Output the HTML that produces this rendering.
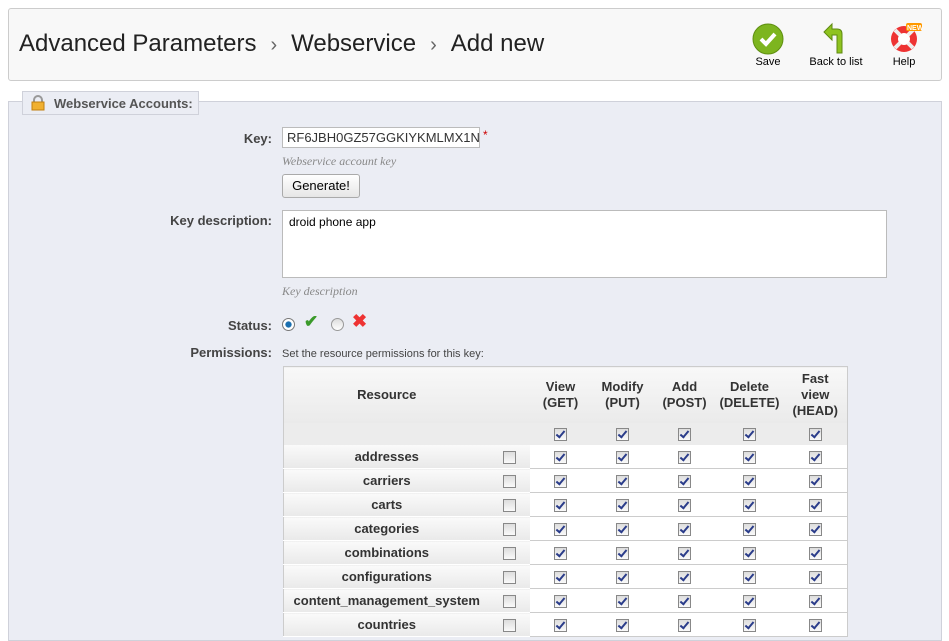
<!DOCTYPE html>
<html><head><meta charset="utf-8"><style>
*{box-sizing:border-box;margin:0;padding:0}
body{width:949px;height:630px;overflow:hidden;background:#fff;font-family:"Liberation Sans",Arial,sans-serif;position:relative;color:#333}
.a{position:absolute}
.hdr{left:8px;top:8px;width:934px;height:73px;border:1px solid #ccc;border-radius:3px;background:#f8f8f8}
.title{left:19px;top:30px;font-size:24px;color:#222;white-space:nowrap}
.title span{color:#666;margin:0 14px;font-size:20px}
.tb{font-size:11px;color:#000;text-align:center}
.fs{left:8px;top:101px;width:934px;height:540px;background:#ebedf4;border:1px solid #cfd1da}
.legend{left:22px;top:91px;width:177px;height:24px;background:#ebedf4;border:1px solid #cfd1da;font-weight:bold;font-size:13px;color:#555;padding:4px 0 0 31px}
.lbl{font-weight:bold;font-size:13px;color:#444;text-align:right;width:120px}
.hint{font-family:"Liberation Serif",serif;font-style:italic;font-size:12px;color:#888}
table{border-collapse:collapse;position:absolute;left:283px;top:366px;width:565px;font-size:13px;border:1px solid #ccc}
td,th{padding:0;text-align:center;height:24px}
th{background:linear-gradient(#f8f8f8,#eaeaea);font-weight:bold;color:#333;line-height:16px;height:56px}
tr.r td.l{background:linear-gradient(#fafafa,#e9e9e9);font-weight:bold;color:#333;border-bottom:1px solid #fff}
tr.r td.w{background:#fff;border-bottom:1px solid #ccc}
tr.g td{background:#ececec;height:22px}
.cb{display:inline-block;width:13px;height:13px;border:1px solid #888;background:linear-gradient(#ddd,#fafafa);vertical-align:middle;position:relative}
.cb.c::after{content:"";position:absolute;left:3px;top:0px;width:3px;height:7px;border:solid #2a3c8a;border-width:0 2px 2px 0;transform:rotate(40deg)}
</style></head><body>
<div class="a hdr"></div>
<div class="a title">Advanced Parameters<span>›</span>Webservice<span>›</span>Add new</div>
<svg class="a" style="left:752px;top:23px" width="32" height="32"><circle cx="16" cy="16" r="15" fill="#7db51f" stroke="#5f8f10"/><path d="M9 16l5 5 9-10" stroke="#fff" stroke-width="4" fill="none"/></svg>
<div class="a tb" style="left:748px;top:56px;width:40px">Save</div>
<svg class="a" style="left:822px;top:22px" width="30" height="32"><path d="M20 31V12q0-5-5-5H10V2L2 10l8 8v-5h5v18z" fill="#8fc31f" stroke="#5e8a10"/></svg>
<div class="a tb" style="left:806px;top:56px;width:60px">Back to list</div>
<svg class="a" style="left:888px;top:22px" width="34" height="32"><circle cx="16" cy="17" r="13" fill="#e33"/><circle cx="16" cy="17" r="6" fill="#fff"/><path d="M7 8l5 5M25 8l-5 5M7 26l5-5M25 26l-5-5" stroke="#eee" stroke-width="4"/><rect x="18" y="1" width="16" height="8" rx="2" fill="#f90"/><text x="19" y="8" font-size="7" fill="#fff" font-weight="bold" font-family="Liberation Sans">NEW</text></svg>
<div class="a tb" style="left:884px;top:56px;width:40px">Help</div>

<div class="a fs"></div>
<div class="a legend">Webservice Accounts:</div>
<svg class="a" style="left:31px;top:95px" width="14" height="16"><path d="M3 7V5a4 4 0 018 0v2" stroke="#999" stroke-width="2" fill="none"/><rect x="1" y="7" width="12" height="8" fill="#f0b030" stroke="#c08010"/></svg>

<div class="a lbl" style="left:152px;top:131px">Key:</div>
<div class="a" style="left:282px;top:127px;width:198px;height:21px;border:1px solid #bbb;background:#fff;font-size:13px;padding:2px 4px;overflow:hidden;white-space:nowrap">RF6JBH0GZ57GGKIYKMLMX1N0C</div>
<div class="a" style="left:483px;top:128px;color:#c00;font-size:12px">*</div>
<div class="a hint" style="left:282px;top:154px">Webservice account key</div>
<div class="a" style="left:282px;top:174px;width:78px;height:24px;border:1px solid #aaa;border-radius:3px;background:linear-gradient(#fff,#e6e6e6);font-size:13px;color:#000;text-align:center;line-height:22px">Generate!</div>

<div class="a lbl" style="left:152px;top:213px">Key description:</div>
<div class="a" style="left:282px;top:210px;width:605px;height:68px;border:1px solid #bbb;background:#fff;font-size:12px;color:#000;padding:4px 6px">droid phone app</div>
<div class="a hint" style="left:282px;top:284px">Key description</div>

<div class="a lbl" style="left:152px;top:318px">Status:</div>
<div class="a" style="left:282px;top:318px;width:13px;height:13px;border-radius:50%;border:1px solid #777;background:radial-gradient(#1a6fb0 35%,#fff 45%)"></div>
<div class="a" style="left:304px;top:312px;color:#3a9a2a;font-size:17px;font-weight:bold">✔</div>
<div class="a" style="left:331px;top:318px;width:13px;height:13px;border-radius:50%;border:1px solid #999;background:linear-gradient(#ddd,#fff)"></div>
<div class="a" style="left:352px;top:311px;color:#e33;font-size:18px;font-weight:bold">✖</div>

<div class="a lbl" style="left:152px;top:345px">Permissions:</div>
<div class="a" style="left:282px;top:348px;font-size:11px;color:#444">Set the resource permissions for this key:</div>

<table>
<tr><th style="width:206px">Resource</th><th style="width:40px"></th><th style="width:62px">View<br>(GET)</th><th style="width:62px">Modify<br>(PUT)</th><th style="width:62px">Add<br>(POST)</th><th style="width:68px">Delete<br>(DELETE)</th><th>Fast<br>view<br>(HEAD)</th></tr>
<tr class="g"><td></td><td></td><td><i class="cb c"></i></td><td><i class="cb c"></i></td><td><i class="cb c"></i></td><td><i class="cb c"></i></td><td><i class="cb c"></i></td></tr>
<tr class="r"><td class="l">addresses</td><td class="l"><i class="cb"></i></td><td class="w"><i class="cb c"></i></td><td class="w"><i class="cb c"></i></td><td class="w"><i class="cb c"></i></td><td class="w"><i class="cb c"></i></td><td class="w"><i class="cb c"></i></td></tr>
<tr class="r"><td class="l">carriers</td><td class="l"><i class="cb"></i></td><td class="w"><i class="cb c"></i></td><td class="w"><i class="cb c"></i></td><td class="w"><i class="cb c"></i></td><td class="w"><i class="cb c"></i></td><td class="w"><i class="cb c"></i></td></tr>
<tr class="r"><td class="l">carts</td><td class="l"><i class="cb"></i></td><td class="w"><i class="cb c"></i></td><td class="w"><i class="cb c"></i></td><td class="w"><i class="cb c"></i></td><td class="w"><i class="cb c"></i></td><td class="w"><i class="cb c"></i></td></tr>
<tr class="r"><td class="l">categories</td><td class="l"><i class="cb"></i></td><td class="w"><i class="cb c"></i></td><td class="w"><i class="cb c"></i></td><td class="w"><i class="cb c"></i></td><td class="w"><i class="cb c"></i></td><td class="w"><i class="cb c"></i></td></tr>
<tr class="r"><td class="l">combinations</td><td class="l"><i class="cb"></i></td><td class="w"><i class="cb c"></i></td><td class="w"><i class="cb c"></i></td><td class="w"><i class="cb c"></i></td><td class="w"><i class="cb c"></i></td><td class="w"><i class="cb c"></i></td></tr>
<tr class="r"><td class="l">configurations</td><td class="l"><i class="cb"></i></td><td class="w"><i class="cb c"></i></td><td class="w"><i class="cb c"></i></td><td class="w"><i class="cb c"></i></td><td class="w"><i class="cb c"></i></td><td class="w"><i class="cb c"></i></td></tr>
<tr class="r"><td class="l">content_management_system</td><td class="l"><i class="cb"></i></td><td class="w"><i class="cb c"></i></td><td class="w"><i class="cb c"></i></td><td class="w"><i class="cb c"></i></td><td class="w"><i class="cb c"></i></td><td class="w"><i class="cb c"></i></td></tr>
<tr class="r"><td class="l">countries</td><td class="l"><i class="cb"></i></td><td class="w"><i class="cb c"></i></td><td class="w"><i class="cb c"></i></td><td class="w"><i class="cb c"></i></td><td class="w"><i class="cb c"></i></td><td class="w"><i class="cb c"></i></td></tr>
</table>
</body></html>
